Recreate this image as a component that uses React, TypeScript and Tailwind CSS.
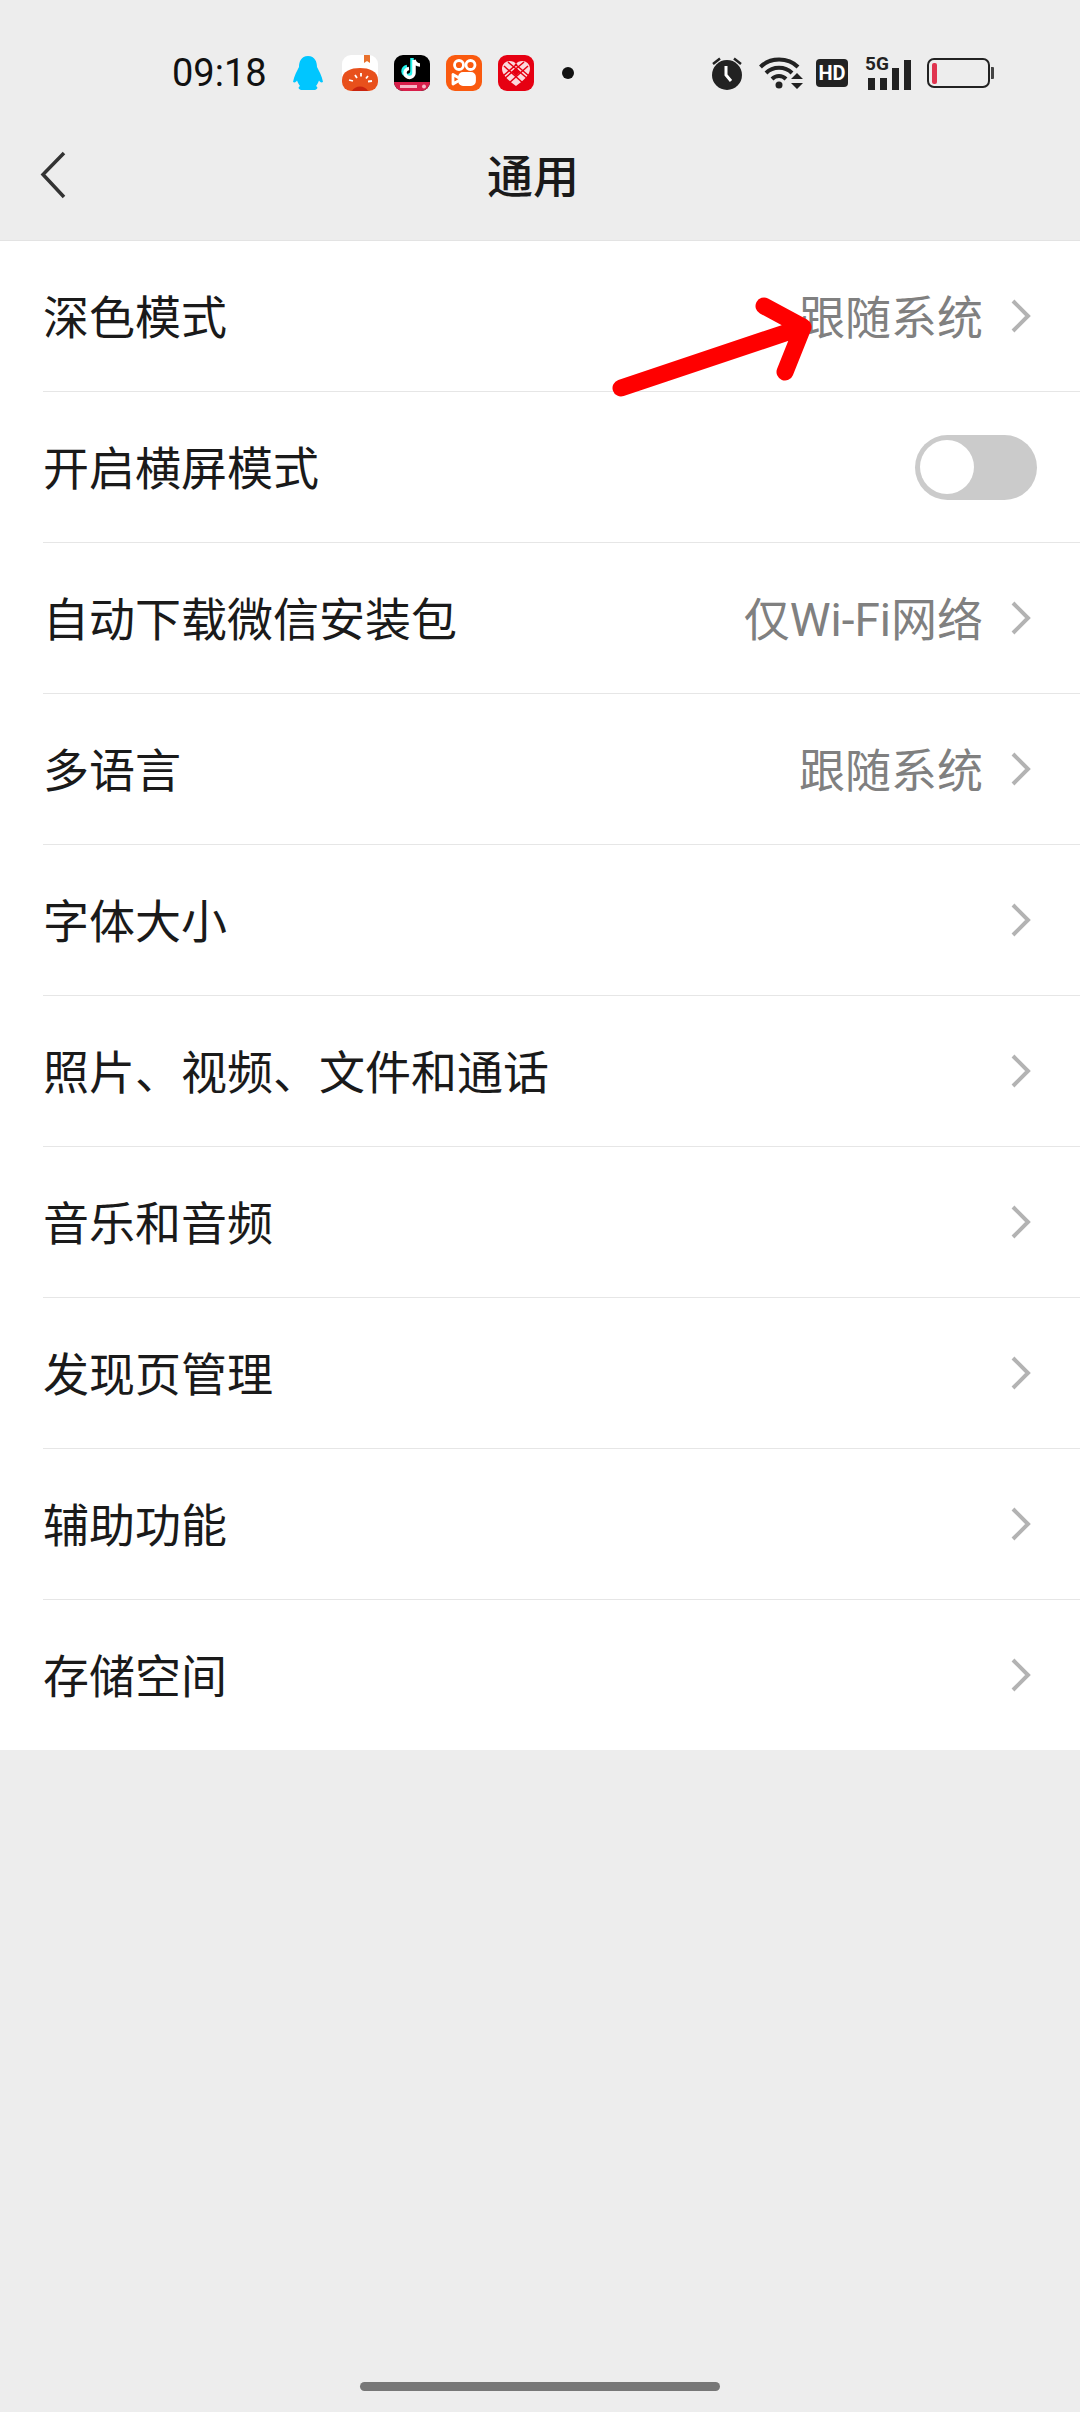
const FONT = "font-['Roboto','Noto_Sans_CJK_SC',sans-serif]";

type RowData = { label: string; value?: string; toggle?: boolean };

const rows: RowData[] = [
  { label: '深色模式', value: '跟随系统' },
  { label: '开启横屏模式', toggle: true },
  { label: '自动下载微信安装包', value: '仅Wi-Fi网络' },
  { label: '多语言', value: '跟随系统' },
  { label: '字体大小' },
  { label: '照片、视频、文件和通话' },
  { label: '音乐和音频' },
  { label: '发现页管理' },
  { label: '辅助功能' },
  { label: '存储空间' },
];

function Chevron() {
  return (
    <svg width="20" height="34" viewBox="0 0 20 34" className="ml-[28px] mr-[6px] shrink-0">
      <path d="M2 2 L17 17 L2 32" fill="none" stroke="#b3b3b3" strokeWidth="4" />
    </svg>
  );
}

function Toggle() {
  return (
    <div className="flex h-[65px] w-[122px] items-center rounded-full bg-[#cbcbcb] pl-[5px]">
      <div className="h-[54px] w-[54px] rounded-full bg-white" />
    </div>
  );
}

function Row({ row, last }: { row: RowData; last: boolean }) {
  return (
    <div className="pl-[43px]">
      <div className={`flex items-center pr-[43px] ${last ? 'h-[150px]' : 'h-[151px] border-b border-[#e6e6e6]'}`}>
        <span className="flex-1 pt-[3px] text-[46px] leading-none text-[#1a1a1a]">{row.label}</span>
        {row.value && <span className="pt-[3px] text-[46px] leading-none text-[#808080]">{row.value}</span>}
        {row.toggle ? <Toggle /> : <Chevron />}
      </div>
    </div>
  );
}

function AppIcon({ bg, children }: { bg: string; children: React.ReactNode }) {
  return (
    <div className={`flex h-[36px] w-[36px] items-center justify-center overflow-hidden rounded-[9px] ${bg}`}>
      {children}
    </div>
  );
}

function StatusBar() {
  return (
    <div className="flex pl-[172px] pr-[86px] pt-[55px]">
      <div className="flex h-[36px] items-center">
        <span className="w-[94px] font-['Roboto'] text-[38px] leading-none text-[#111]">09:18</span>
        {/* qq */}
        <svg width="30" height="34" viewBox="0 0 30 34" className="ml-[27px]">
          <path d="M15 0C8 0 6 6 6 11C4 15 1 20 0 26C2 27 3 26 4 24.500C5 27 6 29 7 30C5 31 5 33 8 34H22C25 33 25 31 23 30C24 29 25 27 26 24.500C27 26 28 27 30 26C29 20 26 15 24 11C24 6 22 0 15 0Z" fill="#00c6ff" />
        </svg>
        {/* tomato novel */}
        <div className="ml-[19px]">
          <AppIcon bg="bg-white">
            <svg width="36" height="36" viewBox="0 0 36 36">
              <path d="M0 25C0 16 9 13 18 13C27 13 36 16 36 25V36H0Z" fill="#e8501c" />
              <path d="M22 0H28V8L25 6L22 8Z" fill="#e8702c" />
              <path d="M7 25l4 1M13 20l2 3M19 18v3.500M26 21l-2 2.500M30 26l-4 .5" stroke="#fff" strokeWidth="1.800" />
              <path d="M10 36C13 30 23 30 26 36Z" fill="#c9240f" />
            </svg>
          </AppIcon>
        </div>
        {/* douyin */}
        <div className="ml-[16px]">
          <AppIcon bg="bg-black">
            <svg width="36" height="36" viewBox="0 0 36 36">
              <rect x="0" y="27" width="36" height="9" fill="#d81e4a" />
              <path d="M19 4V17A4.500 4.500 0 1 1 14 12.500" fill="none" stroke="#25f4ee" strokeWidth="3.500" transform="translate(-1 -1)" />
              <path d="M20 5V18A4.500 4.500 0 1 1 15 13.500M20 5C21 8 23 10 26 10" fill="none" stroke="#fff" strokeWidth="3.500" />
              <rect x="6" y="30" width="17" height="3" fill="#f7b6c6" />
              <circle cx="30" cy="31.500" r="2" fill="#f7b6c6" />
            </svg>
          </AppIcon>
        </div>
        {/* kuaishou */}
        <div className="ml-[16px]">
          <AppIcon bg="bg-[#fa5a0f]">
            <svg width="36" height="36" viewBox="0 0 36 36" fill="none" stroke="#fff" strokeWidth="2.800">
              <circle cx="13" cy="10" r="4.500" />
              <circle cx="24.500" cy="10" r="4.500" />
              <rect x="13.500" y="18.500" width="15" height="11" rx="3.500" fill="#fff" />
              <path d="M13 23L7 19.500V29L13 25.500" strokeLinejoin="round" />
            </svg>
          </AppIcon>
        </div>
        {/* pinduoduo */}
        <div className="ml-[16px]">
          <AppIcon bg="bg-[#e60012]">
            <svg width="36" height="36" viewBox="0 0 36 36">
              <path d="M18 31C10 25 4 20 4 13.500C4 9 8 6 11.500 6C14.500 6 17 7 18 9C19 7 21.500 6 24.500 6C28 6 32 9 32 13.500C32 20 26 25 18 31Z" fill="#fbd9dc" />
              <path d="M6 11L26 29M10 7L30 24M17 9L31 21M30 11L10 29M26 7L6 24M19 9L5 21" stroke="#e60012" strokeWidth="1.500" />
              <rect x="15" y="14" width="6" height="6" fill="#e60012" transform="rotate(45 18 17)" />
            </svg>
          </AppIcon>
        </div>
        <div className="ml-[28px] h-[12px] w-[12px] rounded-full bg-[#111]" />
      </div>
      <div className="ml-auto flex h-[36px] items-center">
        <svg width="30" height="34" viewBox="0 0 30 34">
          <circle cx="15" cy="19" r="15" fill="#222" />
          <path d="M14 10V19L19 25" fill="none" stroke="#fff" strokeWidth="3" />
          <path d="M1 8L8 2.500M29 8L22 2.500" stroke="#222" strokeWidth="2.500" />
        </svg>
        <svg width="44" height="34" viewBox="0 0 44 34" className="ml-[17px]">
          <path d="M1.500 11C11 1 29 1 39 11M7 17C14 10 26 10 33 17M13 23C17 19 23 19 27 23" fill="none" stroke="#222" strokeWidth="4" />
          <circle cx="20" cy="29" r="3.500" fill="#222" />
          <path d="M38 17L44 23H32ZM38 33L44 27H32Z" fill="#222" />
        </svg>
        <div className="ml-[13px] flex h-[28px] w-[32px] items-center justify-center rounded-[4px] bg-[#222] font-['Roboto'] text-[20px] font-bold leading-none text-white">
          HD
        </div>
        <div className="relative ml-[17px] h-[34px] w-[46px]">
          <span className="absolute left-0 top-[-2px] font-['Roboto'] text-[19px] font-bold leading-[20px] text-[#222]">5G</span>
          <div className="absolute bottom-0 left-[3px] h-[12px] w-[7px] bg-[#222]" />
          <div className="absolute bottom-0 left-[15px] h-[12px] w-[7px] bg-[#222]" />
          <div className="absolute bottom-0 left-[27px] h-[22px] w-[7px] bg-[#222]" />
          <div className="absolute bottom-0 left-[39px] h-[30px] w-[7px] bg-[#222]" />
        </div>
        <div className="ml-[16px] flex h-[30px] w-[63px] items-center rounded-[7px] border-2 border-[#222] pl-[3px]">
          <div className="h-[21px] w-[5px] rounded-[2px] bg-[#e0344f]" />
        </div>
        <div className="ml-[1px] h-[12px] w-[3px] rounded-r-[1px] bg-[#444]" />
      </div>
    </div>
  );
}

export default function App() {
  return (
    <div className={`flex min-h-[2412px] flex-col bg-[#ededed] ${FONT}`}>
      <StatusBar />
      <div className="relative flex h-[150px] items-center justify-center border-b border-[#e3e3e3] pr-[14px] pt-[23px]">
        <svg width="26" height="48" viewBox="0 0 26 48" className="absolute left-[40px] top-[60px]">
          <path d="M24 2L3 23.500L24 46" fill="none" stroke="#333" strokeWidth="3.500" />
        </svg>
        <span className="text-[46px] font-medium leading-none text-[#1a1a1a]">通用</span>
      </div>
      <div className="relative bg-white">
        {rows.map((row, i) => (
          <Row key={row.label} row={row} last={i === rows.length - 1} />
        ))}
        <svg width="230" height="130" viewBox="0 0 230 130" className="absolute left-[600px] top-[40px]">
          <path d="M21 107L203 46M164 25L203 46L185 91" fill="none" stroke="#ff0000" strokeWidth="17" strokeLinecap="round" strokeLinejoin="round" />
        </svg>
      </div>
      <div className="mt-auto flex justify-center pb-[21px]">
        <div className="h-[9px] w-[360px] rounded-full bg-[#777]" />
      </div>
    </div>
  );
}
